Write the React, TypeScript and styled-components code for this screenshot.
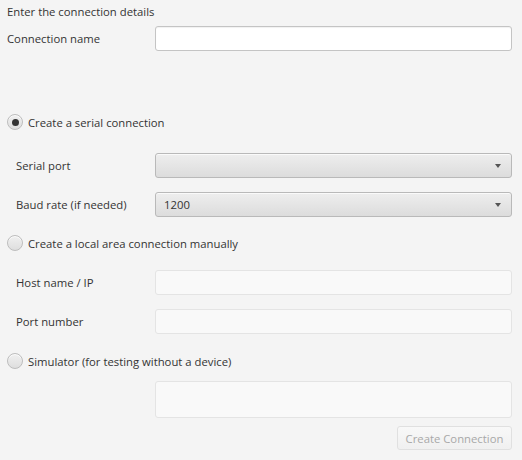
import React, { useState } from "react";
import styled, { createGlobalStyle, css } from "styled-components";

const Global = createGlobalStyle`
  html, body { margin: 0; padding: 0; background: #f4f4f4; }
  * { box-sizing: border-box; }
  body { font-family: "Segoe UI", "Open Sans", "Noto Sans", sans-serif; font-size: 11.3px; color: #333; }
`;

const Page = styled.div`
  width: 522px;
  height: 460px;
  background: #f4f4f4;
  padding: 0 10px 0 7px;
  display: flex;
  flex-direction: column;
`;

const Title = styled.div`
  height: 22px;
  display: flex;
  align-items: center;
`;

const Row = styled.div<{ $indent?: boolean; $mt: number }>`
  display: grid;
  grid-template-columns: ${(p) => (p.$indent ? "139px" : "148px")} 1fr;
  padding-left: ${(p) => (p.$indent ? "9px" : "0")};
  margin-top: ${(p) => p.$mt}px;
  align-items: center;
`;

const Label = styled.span`
  white-space: nowrap;
`;

const fieldBase = css`
  height: 25px;
  border-radius: 3px;
  border: 1px solid #c4c4c4;
  background: #ffffff;
  box-shadow: inset 0 1px 1px rgba(0, 0, 0, 0.06);
`;

const TextField = styled.input<{ $disabled?: boolean }>`
  ${fieldBase}
  width: 100%;
  outline: none;
  font: inherit;
  padding: 0 7px;
  ${(p) =>
    p.$disabled &&
    css`
      border-color: #e4e4e4;
      background: #f9f9f9;
      box-shadow: none;
    `}
`;

const Combo = styled.div`
  height: 25px;
  border-radius: 3px;
  border: 1px solid #b9b9b9;
  background: linear-gradient(to bottom, #eeeeee, #dcdcdc);
  box-shadow: inset 0 1px 0 rgba(255, 255, 255, 0.7);
  display: flex;
  align-items: center;
  justify-content: space-between;
  padding: 0 10px 0 8px;
`;

const Arrow = styled.span`
  width: 0;
  height: 0;
  border-left: 3.5px solid transparent;
  border-right: 3.5px solid transparent;
  border-top: 4px solid #555;
`;

const RadioRow = styled.label<{ $mt: number }>`
  display: flex;
  align-items: center;
  gap: 5px;
  height: 20px;
  margin-top: ${(p) => p.$mt}px;
  cursor: default;
`;

const RadioCircle = styled.span<{ $checked?: boolean }>`
  width: 16px;
  height: 16px;
  border-radius: 50%;
  border: 1px solid #bdbdbd;
  background: linear-gradient(to bottom, #f0f0f0, #dedede);
  box-shadow: inset 0 1px 0 rgba(255, 255, 255, 0.8);
  display: flex;
  align-items: center;
  justify-content: center;
  flex: none;
  &::after {
    content: "";
    display: ${(p) => (p.$checked ? "block" : "none")};
    width: 7px;
    height: 7px;
    border-radius: 50%;
    background: #333;
  }
`;

const AreaRow = styled.div`
  margin-top: 10px;
  padding-left: 148px;
`;

const Area = styled.div`
  height: 37px;
  border-radius: 3px;
  border: 1px solid #e4e4e4;
  background: #f9f9f9;
`;

const ButtonRow = styled.div`
  margin-top: 8px;
  display: flex;
  justify-content: flex-end;
`;

const Button = styled.button`
  width: 115px;
  height: 24px;
  border-radius: 3px;
  border: 1px solid #e0e0e0;
  background: linear-gradient(to bottom, #f8f8f8, #f0f0f0);
  color: #a8a8a8;
  font: inherit;
  padding: 0;
`;

export default function App() {
  const [mode, setMode] = useState("serial");
  return (
    <>
      <Global />
      <Page>
        <Title>Enter the connection details</Title>
        <Row $mt={4}>
          <Label>Connection name</Label>
          <TextField />
        </Row>
        <RadioRow $mt={61} onClick={() => setMode("serial")}>
          <RadioCircle $checked={mode === "serial"} />
          <span>Create a serial connection</span>
        </RadioRow>
        <Row $indent $mt={21}>
          <Label>Serial port</Label>
          <Combo>
            <span />
            <Arrow />
          </Combo>
        </Row>
        <Row $indent $mt={14}>
          <Label>Baud rate (if needed)</Label>
          <Combo>
            <span>1200</span>
            <Arrow />
          </Combo>
        </Row>
        <RadioRow $mt={16} onClick={() => setMode("lan")}>
          <RadioCircle $checked={mode === "lan"} />
          <span>Create a local area connection manually</span>
        </RadioRow>
        <Row $indent $mt={17}>
          <Label>Host name / IP</Label>
          <TextField $disabled disabled />
        </Row>
        <Row $indent $mt={14}>
          <Label>Port number</Label>
          <TextField $disabled disabled />
        </Row>
        <RadioRow $mt={17} onClick={() => setMode("sim")}>
          <RadioCircle $checked={mode === "sim"} />
          <span>Simulator (for testing without a device)</span>
        </RadioRow>
        <AreaRow>
          <Area />
        </AreaRow>
        <ButtonRow>
          <Button disabled>Create Connection</Button>
        </ButtonRow>
      </Page>
    </>
  );
}
